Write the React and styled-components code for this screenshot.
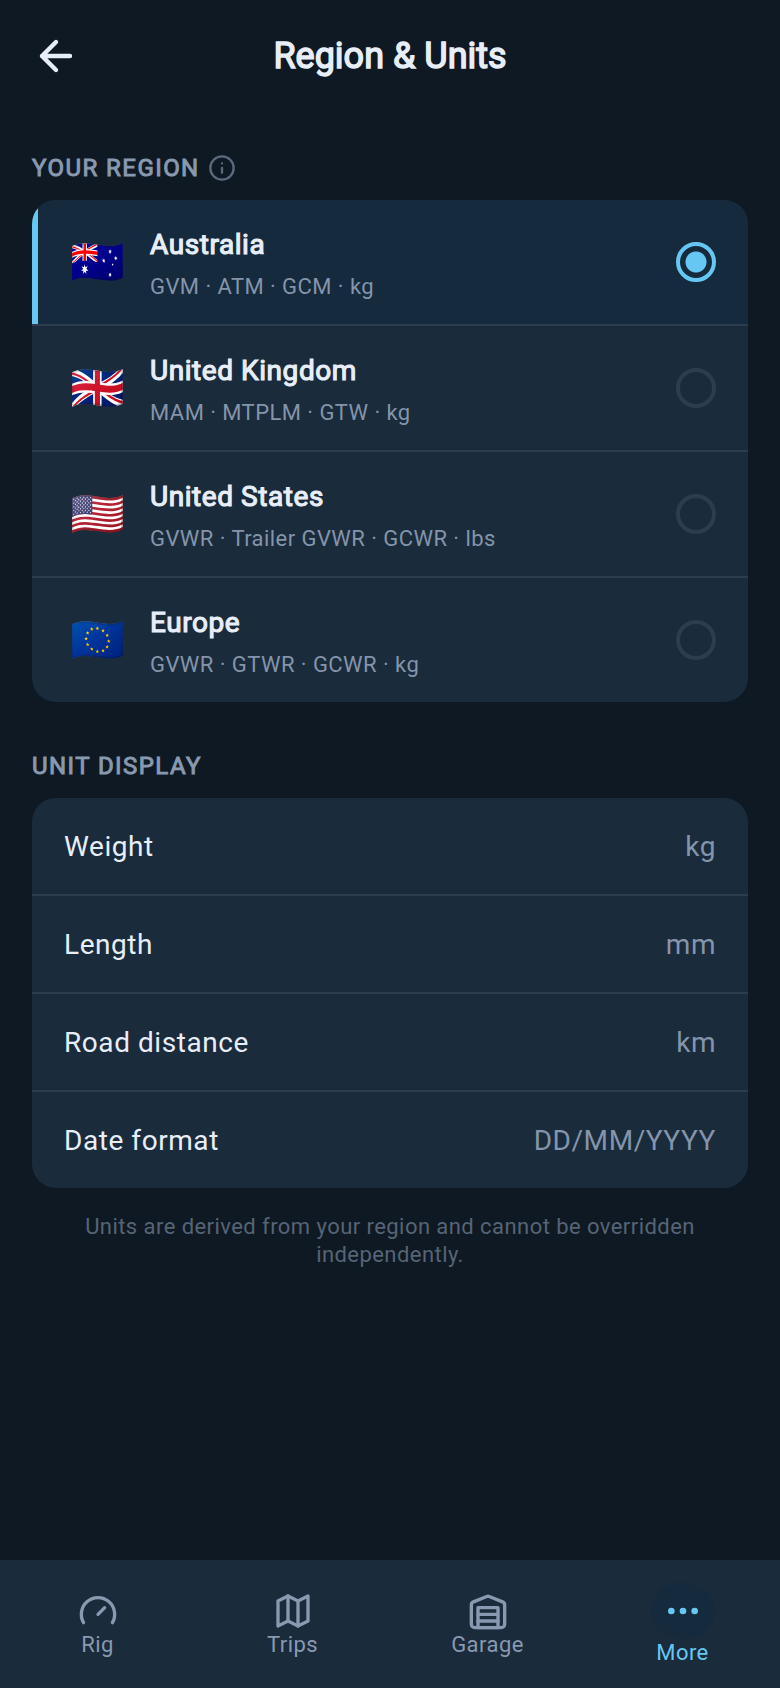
import React, { useState } from "react";
import styled, { createGlobalStyle, css } from "styled-components";

const GlobalStyle = createGlobalStyle`
  *, *::before, *::after { box-sizing: border-box; }
  body {
    margin: 0;
    background: #0f1923;
    color: #e8eef8;
    font-family: Roboto, "Liberation Sans", sans-serif;
    font-size: 28px;
  }
`;

const heavy = css`
  font-weight: 400;
  -webkit-text-stroke: 0.04em currentColor;
`;

const Screen = styled.div`
  min-height: 100vh;
  display: flex;
  flex-direction: column;
`;

const Header = styled.header`
  display: grid;
  grid-template-columns: 48px 1fr 48px;
  align-items: center;
  height: 112px;
  padding: 0 32px;
`;

const IconButton = styled.button`
  display: flex;
  padding: 0;
  border: 0;
  background: none;
  color: ${(p) => (p.$muted ? "#5a6a7c" : "inherit")};
  cursor: pointer;
`;

const Title = styled.h1`
  margin: 0;
  text-align: center;
  font-size: 36px;
  line-height: 48px;
  ${heavy}
`;

const Main = styled.main`
  flex: 1;
  padding: 40px 32px;
`;

const Section = styled.section`
  & + & { margin-top: 48px; }
`;

const SectionHeading = styled.div`
  display: flex;
  align-items: center;
  gap: 8px;
  height: 32px;
  margin-bottom: 16px;
  color: #8899b0;
`;

const SectionTitle = styled.h2`
  margin: 0;
  font-size: 24px;
  line-height: 32px;
  letter-spacing: 0.06em;
  text-transform: uppercase;
  ${heavy}
`;

const Card = styled.div`
  border-radius: 24px;
  overflow: hidden;
  background: #1a2b3c;
`;

const divider = css`
  & + & { border-top: 2px solid #2d3d50; }
`;

const RegionRow = styled.label`
  display: flex;
  align-items: center;
  gap: 20px;
  box-sizing: content-box;
  height: 124px;
  padding: 0 32px;
  cursor: pointer;
  ${divider}
  ${(p) => p.$selected && css`
    background: #162a3d;
    box-shadow: inset 6px 0 #66c8f2;
  `}
`;

const Flag = styled.span`
  width: 66px;
  text-align: center;
  font-size: 44px;
  line-height: 56px;
`;

const RegionText = styled.span`
  flex: 1;
  display: flex;
  flex-direction: column;
  gap: 8px;
  padding-top: 6px;
`;

const RegionName = styled.span`
  font-size: 28px;
  line-height: 36px;
  letter-spacing: 0.02em;
  ${heavy}
`;

const RegionDetail = styled.span`
  font-size: 22px;
  line-height: 32px;
  letter-spacing: 0.02em;
  color: #8494aa;
`;

const Radio = styled.input`
  appearance: none;
  width: 40px;
  height: 40px;
  margin: 0;
  border: 4px solid #2d3d50;
  border-radius: 50%;
  &:checked {
    border-color: #66c8f2;
    background: radial-gradient(circle, #66c8f2 10px, transparent 11px);
  }
`;

const UnitList = styled.dl`
  margin: 0;
  letter-spacing: 0.02em;
`;

const UnitRow = styled.div`
  display: flex;
  align-items: center;
  justify-content: space-between;
  box-sizing: content-box;
  height: 96px;
  padding: 0 32px;
  ${divider}
`;

const UnitName = styled.dt``;

const UnitValue = styled.dd`
  margin: 0;
  color: #8494aa;
`;

const Note = styled.p`
  margin: 25px 32px 0;
  text-align: center;
  font-size: 22px;
  line-height: 28px;
  letter-spacing: 0.02em;
  color: #566475;
`;

const TabBar = styled.nav`
  display: grid;
  grid-template-columns: repeat(4, 1fr);
  height: 128px;
  background: #1a2b3c;
`;

const Tab = styled.a`
  display: flex;
  flex-direction: column;
  align-items: center;
  justify-content: center;
  padding-top: 2px;
  color: ${(p) => (p.$active ? "#66c8f2" : "#8899b0")};
  font-size: 22px;
  line-height: 28px;
  letter-spacing: 0.02em;
  text-decoration: none;
`;

const TabIcon = styled.span`
  display: flex;
  align-items: center;
  justify-content: center;
  width: 64px;
  height: ${(p) => (p.$active ? 56 : 40)}px;
  border-radius: 32px;
  background: ${(p) => (p.$active ? "#162a3d" : "none")};
`;

const Icon = ({ size = 40, stroke = 2, children }) => (
  <svg width={size} height={size} viewBox="0 0 24 24" fill="none" stroke="currentColor"
    strokeWidth={stroke} strokeLinecap="round" strokeLinejoin="round" aria-hidden="true">
    {children}
  </svg>
);

const regions = [
  { id: "au", flag: "🇦🇺", name: "Australia", detail: "GVM · ATM · GCM · kg" },
  { id: "gb", flag: "🇬🇧", name: "United Kingdom", detail: "MAM · MTPLM · GTW · kg" },
  { id: "us", flag: "🇺🇸", name: "United States", detail: "GVWR · Trailer GVWR · GCWR · lbs" },
  { id: "eu", flag: "🇪🇺", name: "Europe", detail: "GVWR · GTWR · GCWR · kg" },
];

const units = [
  ["Weight", "kg"],
  ["Length", "mm"],
  ["Road distance", "km"],
  ["Date format", "DD/MM/YYYY"],
];

const tabs = [
  { name: "Rig", icon: <><path d="m12 14 4-4" /><path d="M3.34 19a10 10 0 1 1 17.32 0" /></> },
  { name: "Trips", icon: <><path d="m3 6 6-3 6 3 6-3v15l-6 3-6-3-6 3Z" /><path d="M9 3v15M15 6v15" /></> },
  { name: "Garage", icon: <><path d="M22 8.35V20a2 2 0 0 1-2 2H4a2 2 0 0 1-2-2V8.35A2 2 0 0 1 3.26 6.5l8-3.2a2 2 0 0 1 1.48 0l8 3.2A2 2 0 0 1 22 8.35Z" /><path d="M6 18h12M6 14h12" /><path d="M6 10h12v12H6Z" /></> },
  { name: "More", active: true, icon: <><circle cx="5" cy="12" r="1" /><circle cx="12" cy="12" r="1" /><circle cx="19" cy="12" r="1" /></> },
];

export default function App() {
  const [region, setRegion] = useState("au");
  return (
    <Screen>
      <GlobalStyle />
      <Header>
        <IconButton aria-label="Back">
          <Icon size={48} stroke={2.2}><path d="m12 19-7-7 7-7M19 12H5" /></Icon>
        </IconButton>
        <Title>Region &amp; Units</Title>
      </Header>
      <Main>
        <Section>
          <SectionHeading>
            <SectionTitle>Your region</SectionTitle>
            <IconButton $muted aria-label="About regions">
              <Icon size={28}><circle cx="12" cy="12" r="10" /><path d="M12 16v-4M12 8h.01" /></Icon>
            </IconButton>
          </SectionHeading>
          <Card>
            {regions.map((r) => (
              <RegionRow key={r.id} $selected={region === r.id}>
                <Flag aria-hidden="true">{r.flag}</Flag>
                <RegionText>
                  <RegionName>{r.name}</RegionName>
                  <RegionDetail>{r.detail}</RegionDetail>
                </RegionText>
                <Radio type="radio" name="region" value={r.id} checked={region === r.id}
                  onChange={() => setRegion(r.id)} />
              </RegionRow>
            ))}
          </Card>
        </Section>
        <Section>
          <SectionHeading><SectionTitle>Unit display</SectionTitle></SectionHeading>
          <Card>
            <UnitList>
              {units.map(([name, value]) => (
                <UnitRow key={name}>
                  <UnitName>{name}</UnitName>
                  <UnitValue>{value}</UnitValue>
                </UnitRow>
              ))}
            </UnitList>
          </Card>
          <Note>Units are derived from your region and cannot be overridden independently.</Note>
        </Section>
      </Main>
      <TabBar>
        {tabs.map((t) => (
          <Tab key={t.name} href={"#" + t.name.toLowerCase()} $active={t.active}
            aria-current={t.active ? "page" : undefined}>
            <TabIcon $active={t.active}><Icon>{t.icon}</Icon></TabIcon>
            {t.name}
          </Tab>
        ))}
      </TabBar>
    </Screen>
  );
}
